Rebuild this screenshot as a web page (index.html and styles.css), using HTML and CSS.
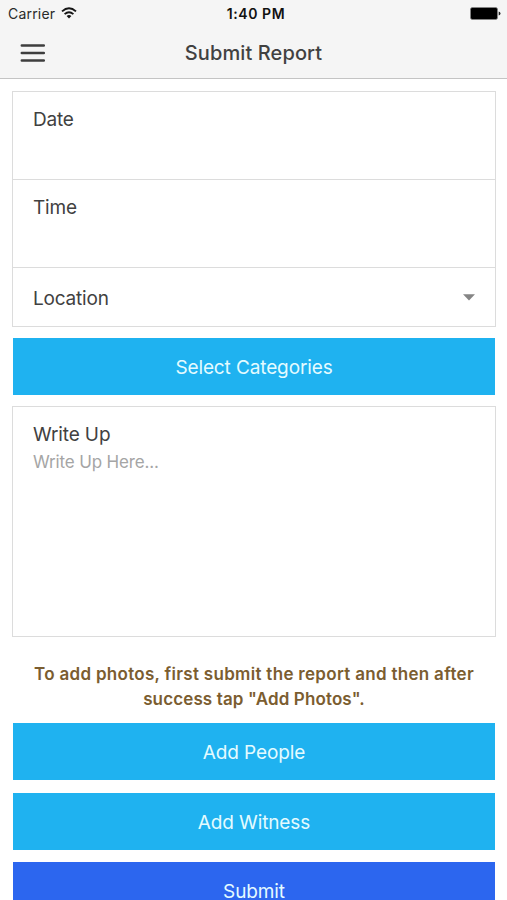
FILE: index.html
```html
<!DOCTYPE html>
<html lang="en">
<head>
<meta charset="utf-8">
<title>Submit Report</title>
<link rel="stylesheet" href="styles.css">
</head>
<body>
<header class="header">
  <div class="status">
    <div class="carrier"><span>Carrier</span>
      <svg class="wifi" width="16" height="12" viewBox="0 0 16 12" fill="none" stroke="#161616" stroke-width="1.9"><path d="M1 4.4Q8-1.7 15 4.4M3.6 7.1Q8 3.3 12.4 7.1"/><path d="M8 11.4 5.6 9Q8 7 10.4 9Z" fill="#161616" stroke="none"/></svg>
    </div>
    <span class="clock">1:40 PM</span>
    <svg class="battery" width="31" height="13" viewBox="0 0 31 13"><rect x=".5" y=".5" width="27" height="12" rx="1.8" fill="#000" stroke="#888" stroke-width=".7"/><path d="M28.7 4.5Q30.5 4.8 30.5 6.5T28.7 8.5Z" fill="#222"/></svg>
  </div>
  <div class="navbar">
    <svg class="menu" width="26" height="20" viewBox="0 0 26 20" stroke="#3e3e3e" stroke-width="2.5" stroke-linecap="round"><path d="M1.8 2.5H23.8M1.8 10H23.8M1.8 17.4H23.8"/></svg>
    <h1 class="title">Submit Report</h1>
  </div>
</header>
<main class="content">
  <section class="card">
    <div class="field"><span>Date</span></div>
    <div class="field"><span>Time</span></div>
    <div class="field select"><span>Location</span>
      <svg width="12" height="7" viewBox="0 0 12 7"><path d="M0 .3H12L6 6.5Z" fill="#858585"/></svg>
    </div>
  </section>
  <button class="button">Select Categories</button>
  <section class="card writeup">
    <div class="label">Write Up</div>
    <div class="placeholder">Write Up Here...</div>
  </section>
  <p class="note"><span class="line-one">To add photos, first submit the report and then after</span><br><span class="line-two">success tap "Add Photos".</span></p>
  <div class="actions">
    <button class="button">Add People</button>
    <button class="button witness">Add Witness</button>
    <button class="button submit">Submit</button>
  </div>
</main>
</body>
</html>
```
FILE: styles.css
```css
* { box-sizing: border-box; }
html, body { height: 900px; overflow: hidden; }
body { margin: 0; background: #fff; color: #414141; font-family: Inter, "Liberation Sans", sans-serif; font-size: 19px; letter-spacing: -.2px; }
.header { height: 79px; background: #f5f5f5; border-bottom: 1px solid #c4c4c4; }
.status { display: grid; grid-template-columns: 1fr auto 1fr; align-items: center; height: 27px; padding: 0 6px 0 8px; }
.carrier { display: flex; align-items: center; gap: 6px; font-size: 14px; letter-spacing: .2px; color: #2a2a2a; }
.wifi { margin-top: -2px; }
.clock { padding-left: 3px; font-size: 14px; font-weight: 600; color: #111; letter-spacing: .55px; }
.battery { justify-self: end; }
.navbar { display: grid; grid-template-columns: 46px 1fr 46px; align-items: center; height: 51px; }
.menu { margin-left: 20px; }
.title { margin: 0; font-size: 20px; font-weight: 500; line-height: 24px; letter-spacing: .1px; text-align: center; }
.content { padding: 12px 11px 0 12px; }
.card { border: 1px solid #dcdcdc; background: #fff; }
.field { height: 88px; padding: 16px 20px 14px; line-height: 24px; border-bottom: 1px solid #dcdcdc; }
.select { display: flex; align-items: center; justify-content: space-between; height: 58px; padding: 18px 20px 14px; border-bottom: 0; }
.select svg { margin-top: -4px; }
.button { display: flex; justify-content: center; align-items: center; width: calc(100% - 2px); height: 57px; margin: 11px 1px; padding: 3px 0 0; border: 0; border-radius: 0; background: #1fb2f0; color: #e4fbff; font: inherit; line-height: 24px; letter-spacing: -.12px; }
.writeup { height: 231px; padding: 16px 20px; }
.label { line-height: 24px; letter-spacing: -.12px; }
.placeholder { margin-top: 3px; font-size: 17px; line-height: 24px; letter-spacing: -.15px; color: #a5a5a5; }
.note { margin: 25px 0 12px; text-align: center; color: #7b5d30; font-size: 17px; font-weight: 600; line-height: 24.5px; white-space: nowrap; }
.line-one { letter-spacing: .3px; }
.line-two { letter-spacing: .13px; }
.actions { display: flex; flex-direction: column; gap: 12.5px; }
.actions .button { margin-top: 0; margin-bottom: 0; flex: none; }
.actions .submit { background: #2c66ef; }
```
